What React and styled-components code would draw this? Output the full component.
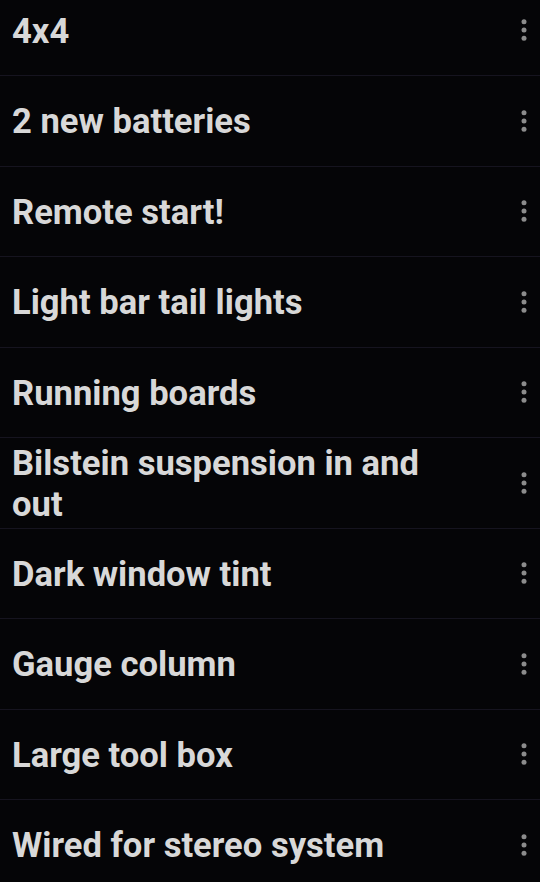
import React from "react";
import styled, { createGlobalStyle } from "styled-components";

const GlobalStyle = createGlobalStyle`
  html, body {
    margin: 0;
    padding: 0;
    background: #050507;
    overflow: hidden;
  }
`;

const List = styled.ul`
  list-style: none;
  margin: -14.5px 0 0 0;
  padding: 0;
  width: 540px;
  font-family: Roboto, "Liberation Sans", sans-serif;
`;

const Row = styled.li`
  display: flex;
  align-items: center;
  box-sizing: border-box;
  height: 90.5px;
  border-bottom: 1px solid #16141f;
`;

const Title = styled.span`
  flex: 1;
  padding: 2px 48px 0 12px;
  font-size: 34.6px;
  font-weight: 700;
  line-height: 41px;
  color: #d8d8d8;
`;

const MenuButton = styled.button`
  display: flex;
  align-items: center;
  justify-content: center;
  width: 32px;
  height: 40px;
  padding: 0;
  border: none;
  background: transparent;
  color: #8c8c8c;
`;

function MoreIcon() {
  return (
    <svg width="10" height="26" viewBox="0 0 10 26">
      <circle cx="5" cy="4.7" r="2.5" fill="currentColor" />
      <circle cx="5" cy="13" r="2.5" fill="currentColor" />
      <circle cx="5" cy="21.3" r="2.5" fill="currentColor" />
    </svg>
  );
}

const items = [
  "4x4",
  "2 new batteries",
  "Remote start!",
  "Light bar tail lights",
  "Running boards",
  "Bilstein suspension in and out",
  "Dark window tint",
  "Gauge column",
  "Large tool box",
  "Wired for stereo system",
];

export default function App() {
  return (
    <>
      <GlobalStyle />
      <List>
        {items.map((item) => (
          <Row key={item}>
            <Title>{item}</Title>
            <MenuButton>
              <MoreIcon />
            </MenuButton>
          </Row>
        ))}
      </List>
    </>
  );
}
